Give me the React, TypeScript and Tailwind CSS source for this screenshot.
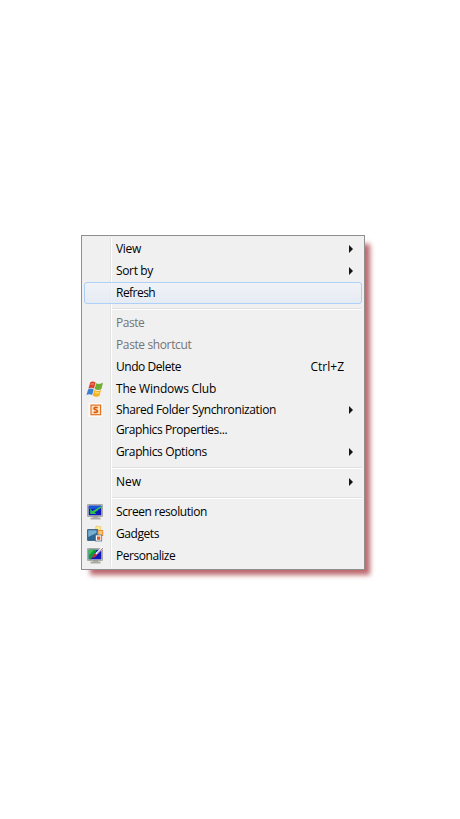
import type { ReactNode } from "react";

type Item = {
  label: string;
  track?: string;
  height?: string;
  icon?: ReactNode;
  arrow?: boolean;
  shortcut?: string;
  disabled?: boolean;
  active?: boolean;
};

function WindowsFlag() {
  return (
    <svg width="18" height="18" viewBox="0 0 18 18">
      <path d="M4.300 2.200C6 1 8 1.400 9.600 2.500L8 8.600C6.400 7.600 4.500 7.500 2.400 8.700Z" fill="#d8432c" />
      <path d="M10.200 3.200C12.300 4.300 14.500 4.100 17 2.800L15.300 9.300C13 10.500 10.600 10.200 8.600 9Z" fill="#6fae35" />
      <path d="M2.100 9.400C4.200 8.200 6 8.500 7.700 9.500L6.100 15C4.500 14 2.600 13.800 .5 14.900Z" fill="#3b7fd0" />
      <path d="M8.300 9.900C10.400 11.200 12.700 11.200 15.100 10L13.400 16C11.200 17.200 8.800 16.900 6.700 15.500Z" fill="#f0b323" />
      <path d="M5 3.400Q6.500 2.600 8 3.300L7.500 5Q6 4.400 4.400 5Z" fill="#ef8d72" opacity=".8" />
      <path d="M9.200 11.200Q11.300 12.300 13.700 11.700L13.200 13.500Q10.700 14.100 8.700 13Z" fill="#ffe27a" opacity=".7" />
    </svg>
  );
}

function SharedFolder() {
  return (
    <svg width="18" height="18" viewBox="0 0 18 18">
      <rect x="2.500" y="2" width="14" height="14" rx=".5" fill="#fafafa" />
      <rect x="5" y="4.100" width="9.600" height="9.600" fill="#fde3c8" stroke="#e5731c" strokeWidth="1.200" />
      <path d="M11.700 6.700C10.200 6 8 6.200 8 7.500C8 8.900 11.500 8.500 11.500 10.100C11.500 11.500 9.200 11.700 7.700 10.900" fill="none" stroke="#d65d10" strokeWidth="1.700" />
    </svg>
  );
}

function Monitor({ brush }: { brush?: boolean }) {
  return (
    <svg width="18" height="18" viewBox="0 0 18 18">
      <path d="M7 13H12V14.500H14.500V16.500H4.500V14.500H7Z" fill="#aaa9a5" />
      <rect x="1.500" y="1.500" width="15" height="12" rx=".3" fill="#c9c9c4" stroke="#96968f" strokeWidth=".7" />
      <rect x="2.700" y="2.700" width="12.600" height="9.600" fill="#1018bd" />
      {brush ? (
        <>
          <path d="M2.700 2.700H11L5 12.300H2.700Z" fill="#119c35" />
          <path d="M2.700 2.700H8L3 8Z" fill="#36c94a" />
          <path d="M17 .5L9.500 7.500" stroke="#fff" strokeWidth="2.200" />
          <path d="M17 1L11 6.600" stroke="#9a4d77" strokeWidth=".8" />
          <path d="M9.800 6.300L7.500 7.800L6 10.800L9 10.200L11 8Z" fill="#c62e3a" />
        </>
      ) : (
        <>
          <path d="M2.700 2.700H15.300V4.500L8 6H2.700Z" fill="#1b55da" />
          <path d="M15 4.200L7.500 8.300" stroke="#35cf55" strokeWidth="1.500" />
          <path d="M4.200 5.300V11H10.500L8.500 9.500L12.500 7H8.500L6.500 8.300Z" fill="#2bc34a" />
        </>
      )}
    </svg>
  );
}

function Gadgets() {
  return (
    <svg width="18" height="18" viewBox="0 0 18 18">
      <path d="M10 1L14.800 1.800L14 6.500L9.500 5.500Z" fill="#fbe99e" stroke="#eac254" strokeWidth=".7" />
      <rect x="1.500" y="4.500" width="10.500" height="11" rx=".3" fill="#2d658f" stroke="#254e71" strokeWidth=".7" />
      <path d="M2.200 5.200H10.500V8L2.200 12Z" fill="#76aed0" />
      <rect x="12" y="5.500" width="4.700" height="5" fill="#f9c57e" stroke="#ea8b2d" strokeWidth="1" />
      <rect x="9.500" y="10" width="6.200" height="6" fill="#fff" stroke="#54718a" strokeWidth=".8" />
      <rect x="11" y="11.500" width="3.300" height="3.300" fill="#db5b2a" />
    </svg>
  );
}

const groups: Item[][] = [
  [
    { label: "View", track: "tracking-[-0.3px]", arrow: true },
    { label: "Sort by", track: "tracking-[-0.35px]", arrow: true },
    { label: "Refresh", track: "tracking-[-0.53px]", active: true },
  ],
  [
    { label: "Paste", track: "tracking-[-0.45px]", disabled: true },
    { label: "Paste shortcut", track: "tracking-[-0.38px]", disabled: true },
    { label: "Undo Delete", track: "tracking-[-0.45px]", shortcut: "Ctrl+Z" },
    { label: "The Windows Club", track: "tracking-[-0.2px]", icon: <WindowsFlag /> },
    {
      label: "Shared Folder Synchronization",
      track: "tracking-[-0.38px]",
      height: "h-5",
      icon: <SharedFolder />,
      arrow: true,
    },
    { label: "Graphics Properties...", track: "tracking-[-0.41px]", height: "h-[21px] pb-0.5" },
    { label: "Graphics Options", track: "tracking-[-0.38px]", arrow: true },
  ],
  [{ label: "New", arrow: true }],
  [
    { label: "Screen resolution", track: "tracking-[-0.42px]", icon: <Monitor /> },
    { label: "Gadgets", track: "tracking-[-0.43px]", icon: <Gadgets /> },
    { label: "Personalize", track: "tracking-[-0.45px]", icon: <Monitor brush /> },
  ],
];

function Row({ item }: { item: Item }) {
  return (
    <div
      className={`flex items-center rounded-[3px] border ${item.height ?? "h-[22px]"} ${
        item.active ? "border-[#aecff7] bg-linear-to-b from-[#f0f3f7]/80 to-[#e3eaf5]/80" : "border-transparent"
      } ${item.disabled ? "text-[#747474]" : "text-black"}`}
    >
      <span className="flex w-[31px] shrink-0 pl-px">{item.icon}</span>
      <span className={`whitespace-nowrap ${item.track ?? ""}`}>{item.label}</span>
      {item.shortcut && <span className="mr-[17px] ml-auto">{item.shortcut}</span>}
      {item.arrow && (
        <svg className="mr-[7px] ml-auto" width="6" height="8" viewBox="0 0 6 8">
          <path d="M1 0L5 4L1 8Z" fill="#151515" />
        </svg>
      )}
    </div>
  );
}

export default function App() {
  return (
    <main className="min-h-[819px] w-[460px] bg-white pt-[235px] pl-[81px]">
      <div className="h-[335px] w-[284px] border border-[#8f8f8f] bg-[#f0f0f0] bg-[linear-gradient(90deg,transparent_26px,#e2e3e3_26px,#e2e3e3_27px,#fff_27px,#fff_28px,transparent_28px)] bg-origin-content bg-no-repeat p-0.5 font-['Open_Sans','Noto_Sans',sans-serif] text-[12px] leading-4 shadow-[7px_7px_5px_-2px_#bd686e]">
        {groups.map((group, index) => (
          <div key={index}>
            {index > 0 && (
              <div className="h-2 pt-1">
                <div className="ml-[28px] h-0.5 border-t border-b border-t-[#e0e0e0] border-b-white" />
              </div>
            )}
            {group.map((item) => (
              <Row key={item.label} item={item} />
            ))}
          </div>
        ))}
      </div>
    </main>
  );
}
